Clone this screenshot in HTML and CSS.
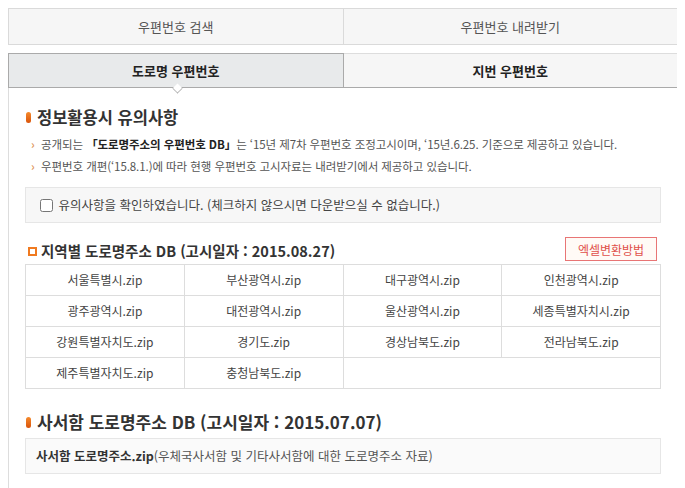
FILE: index.html
```html
<!DOCTYPE html>
<html lang="ko">
<head>
    <meta charset="UTF-8">
    <title>우편번호 내려받기</title>
    <link rel="stylesheet" href="styles.css">
</head>
<body>
    <div class="wrap">
        <div class="tabs-top">
            <div class="tab-top">우편번호 검색</div>
            <div class="tab-top">우편번호 내려받기</div>
        </div>
        <div class="tabs-sub">
            <div class="tab-sub on">도로명 우편번호<span class="arrow"></span></div>
            <div class="tab-sub">지번 우편번호</div>
        </div>
        <div class="panel">
            <h2 class="tit pill">정보활용시 유의사항</h2>
            <ul class="notes">
                <li>공개되는 <b>「도로명주소의 우편번호 DB」</b>는 ‘15년 제7차 우편번호 조정고시이며, ‘15년.6.25. 기준으로 제공하고 있습니다.</li>
                <li>우편번호 개편(‘15.8.1.)에 따라 현행 우편번호 고시자료는 내려받기에서 제공하고 있습니다.</li>
            </ul>
            <div class="agree">
                <label><input type="checkbox" class="chk"> 유의사항을 확인하였습니다. (체크하지 않으시면 다운받으실 수 없습니다.)</label>
            </div>

            <div class="sub-head">
                <h3 class="tit2">지역별 도로명주소 DB (고시일자 : 2015.08.27)</h3>
                <button class="btn-excel">엑셀변환방법</button>
            </div>
            <div class="grid">
                <a>서울특별시.zip</a>
                <a>부산광역시.zip</a>
                <a>대구광역시.zip</a>
                <a>인천광역시.zip</a>
                <a>광주광역시.zip</a>
                <a>대전광역시.zip</a>
                <a>울산광역시.zip</a>
                <a>세종특별자치시.zip</a>
                <a>강원특별자치도.zip</a>
                <a>경기도.zip</a>
                <a>경상남북도.zip</a>
                <a>전라남북도.zip</a>
                <a>제주특별자치도.zip</a>
                <a>충청남북도.zip</a>
                <a class="empty"></a>
            </div>

            <h2 class="tit pill big">사서함 도로명주소 DB (고시일자 : 2015.07.07)</h2>
            <div class="pobox"><b>사서함 도로명주소.zip</b>(우체국사서함 및 기타사서함에 대한 도로명주소 자료)</div>
        </div>
    </div>
</body>
</html>
```

FILE: styles.css
```css
body{
 margin: 8px;
 font-family: "Noto Sans CJK KR", "Noto Sans", sans-serif;
 color: #444;
 background: #fff;
}
.wrap{
 width: 670px;
}
.tabs-top{
 display: flex;
}
.tab-top{
 flex: 1;
 height: 35px;
 line-height: 35px;
 text-align: center;
 font-size: 13px;
 color: #555;
 background-color: #f6f6f6;
 border: 1px solid #dadada;
}
.tab-top + .tab-top{
 border-left: none;
}
.tabs-sub{
 display: flex;
 margin-top: 8px;
 border-bottom: 1px solid #aaa;
}
.tab-sub{
 flex: 1;
 height: 33px;
 line-height: 33px;
 text-align: center;
 font-size: 13px;
 font-weight: bold;
 color: #222;
 background-color: #f6f6f6;
 border-top: 1px solid #ddd;
 border-right: 1px solid #ddd;
 position: relative;
}
.tab-sub.on{
 background-color: #e8eaeb;
 border: 1px solid #aaa;
 border-bottom: none;
}
.arrow{
 position: absolute;
 left: 164px;
 bottom: -6px;
 width: 8px;
 height: 8px;
 background: #fff;
 border-right: 1px solid #aaa;
 border-bottom: 1px solid #aaa;
 transform: rotate(45deg) scale(0.8, 0.8);
}
.panel{
 border-left: 1px solid #ddd;
 border-right: 1px solid #ddd;
 padding: 17px 16px 20px 16px;
}
.tit{
 margin: 0;
 font-size: 16.5px;
 line-height: 24px;
 color: #333;
 padding-left: 12px;
 position: relative;
}
.pill::before{
 content: "";
 position: absolute;
 left: 1px;
 top: 7px;
 width: 5px;
 height: 11px;
 border-radius: 3px;
 background: linear-gradient(#f58a2c, #d9530a);
}
.notes{
 list-style: none;
 margin: 4px 0 0 0;
 padding: 0;
 font-size: 11.5px;
 color: #555;
}
.notes li{
 line-height: 22px;
 padding-left: 16px;
 position: relative;
 letter-spacing: -0.08px;
}
.notes li::before{
 content: "›";
 position: absolute;
 left: 6px;
 top: 0;
 color: #e09a60;
 font-weight: bold;
}
.notes b{
 color: #222;
}
.agree{
 margin-top: 10px;
 height: 34px;
 line-height: 34px;
 background-color: #f7f7f7;
 border: 1px solid #e6e6e6;
 padding-left: 14px;
 font-size: 12.5px;
 color: #444;
}
.chk{
 width: 13px;
 height: 13px;
 margin: 0 2px 0 0;
 vertical-align: -2px;
}
.sub-head{
 display: flex;
 justify-content: space-between;
 align-items: flex-end;
 margin-top: 14px;
 padding-right: 4px;
}
.tit2{
 margin: 0 0 2px 0;
 font-size: 14.5px;
 line-height: 22px;
 color: #333;
 padding-left: 16px;
 position: relative;
}
.tit2::before{
 content: "";
 position: absolute;
 left: 3px;
 top: 7px;
 width: 5px;
 height: 5px;
 border: 2px solid #f07a20;
}
.btn-excel{
 height: 24px;
 width: 92px;
 padding: 0;
 font-family: inherit;
 font-size: 12px;
 color: #e0504a;
 background-color: #fffaf6;
 border: 1px solid #e87575;
 margin-bottom: 3px;
}
.grid{
 display: grid;
 grid-template-columns: repeat(4, 1fr);
 grid-auto-rows: 31px;
 border-top: 1px solid #ddd;
 border-left: 1px solid #ddd;
}
.grid a{
 line-height: 30px;
 text-align: center;
 font-size: 12px;
 color: #444;
 border-right: 1px solid #ddd;
 border-bottom: 1px solid #ddd;
}
.grid .empty{
 grid-column: span 2;
}
.big{
 margin-top: 21px;
 font-size: 17px;
}
.pobox{
 margin-top: 4px;
 height: 34px;
 line-height: 34px;
 background-color: #fafafa;
 border: 1px solid #e6e6e6;
 padding-left: 10px;
 font-size: 12.5px;
 color: #555;
}
.pobox b{
 color: #333;
}
```
